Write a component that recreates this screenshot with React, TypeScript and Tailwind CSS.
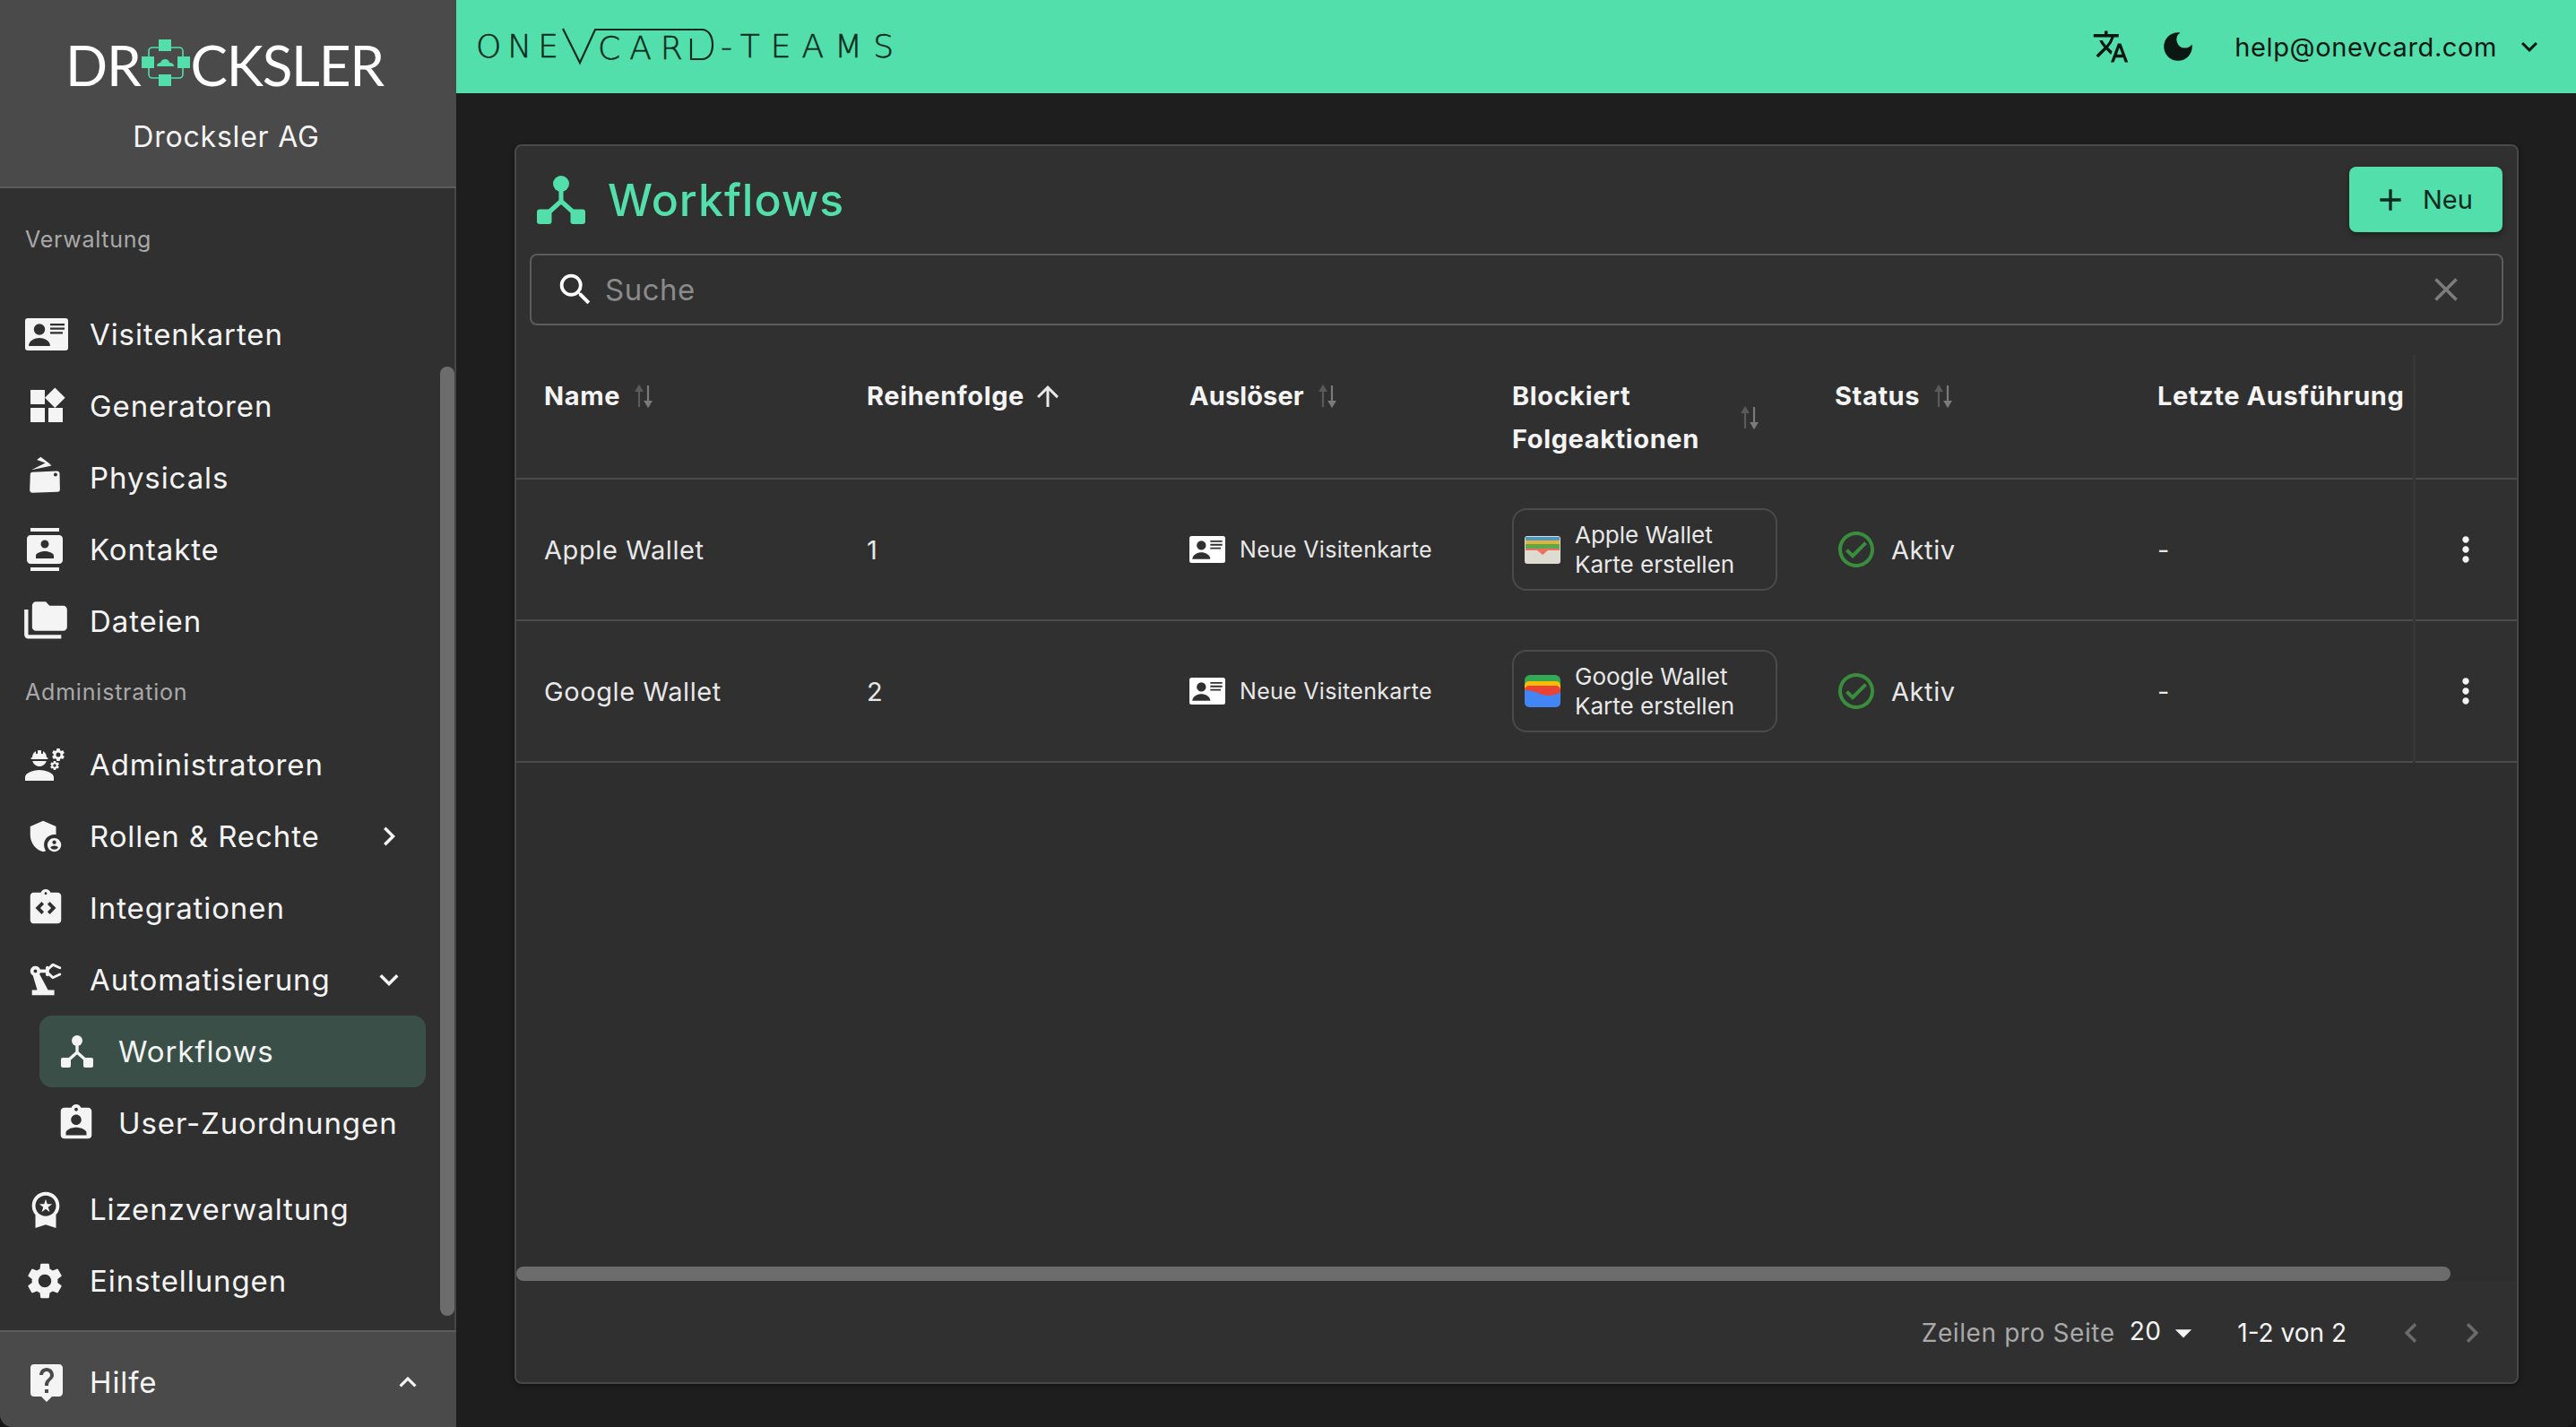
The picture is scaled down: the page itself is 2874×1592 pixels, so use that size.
import React from "react";
import {
  MdWidgets, MdContacts, MdFolderCopy, MdEngineering, MdAdminPanelSettings, MdIntegrationInstructions,
  MdPrecisionManufacturing, MdAssignmentInd, MdWorkspacePremium, MdSettings, MdLiveHelp, MdChevronRight,
  MdExpandMore, MdExpandLess, MdTranslate, MdDarkMode, MdAdd, MdSearch, MdClose, MdArrowUpward, MdMoreVert,
  MdOutlineCheckCircle, MdArrowDropDown, MdChevronLeft,
} from "react-icons/md";

const FONT = "font-['Inter','Liberation_Sans',sans-serif]";

function CardIcon({ className }: { className?: string }) {
  return (
    <svg viewBox="0 0 48 36" className={className}>
      <path fill="currentColor" d="M3 0h42a3 3 0 0 1 3 3v30a3 3 0 0 1-3 3H3a3 3 0 0 1-3-3V3a3 3 0 0 1 3-3z" />
      <circle cx="16" cy="12.5" r="6.2" fill="#303030" />
      <path d="M4 31c0-6 7-9 12-9s12 3 12 9z" fill="#303030" />
      <path d="M28 6h16v2.2H28zM28 10.6h16v2.2H28zM28 15.2h14v2.2H28z" fill="#303030" />
    </svg>
  );
}

function FlowIcon({ className }: { className?: string }) {
  return (
    <svg viewBox="0 0 36 36" className={className}>
      <circle cx="18" cy="6" r="6" fill="currentColor" />
      <path d="M18 8v11M18 19 8 28M18 19l10 9" stroke="currentColor" strokeWidth="3.4" fill="none" />
      <rect x="0" y="25" width="11" height="11" rx="2" fill="currentColor" />
      <rect x="25" y="25" width="11" height="11" rx="2" fill="currentColor" />
    </svg>
  );
}

function PhysicalIcon({ className }: { className?: string }) {
  return (
    <svg viewBox="0 0 120 130" className={className}>
      <path d="M8 60Q8 55 14 54L98 50Q106 50 107 58L108 112Q108 120 100 120L14 123Q7 123 6 115Z" fill="currentColor" />
      <circle cx="93" cy="62" r="6" fill="#303030" />
      <path d="M12 46 60 22 80 32ZM30 12 43 2 80 30Z" fill="currentColor" />
    </svg>
  );
}

function SortIcon() {
  return (
    <svg viewBox="0 0 24 28" className="w-[24px] h-[28px]">
      <path d="M7 6v20M4 8l3-5 3 5z" stroke="#5a5a5a" strokeWidth="2.2" fill="#5a5a5a" />
      <path d="M17 2v20M14 20l3 5 3-5z" stroke="#7a7a7a" strokeWidth="2.2" fill="#7a7a7a" />
    </svg>
  );
}

function Logo() {
  return (
    <div className="flex items-center justify-center h-[78px] text-white -translate-x-[4px]">
      <span className="font-['Lato',sans-serif] text-[62px] leading-none font-normal tracking-[-1.2px]">DR</span>
      <svg viewBox="0 0 54 52" className="w-[54px] h-[52px] mx-[1px] -translate-y-[2px]">
        <path d="M8 13a4 4 0 0 1 4-4h30a4 4 0 0 1 4 4v26a4 4 0 0 1-4 4H12a4 4 0 0 1-4-4z" fill="none" stroke="#52dfab" strokeWidth="1.6" />
        <rect x="19" y="0" width="14" height="13" fill="#52dfab" />
        <rect x="19" y="39" width="14" height="13" fill="#52dfab" />
        <rect x="0" y="19" width="14" height="13" fill="#52dfab" />
        <rect x="40" y="19" width="14" height="13" fill="#52dfab" />
        <path d="M17 30c0-3 2-4 4-4 1-3 3-4 5-4 3 0 5 2 5 4 3 0 5 1 5 4z" fill="#52dfab" />
      </svg>
      <span className="font-['Lato',sans-serif] text-[62px] leading-none font-normal tracking-[-1.2px]">CKSLER</span>
    </div>
  );
}

function NavRow({ icon, label, trail, active, sub }: { icon: React.ReactNode; label: string; trail?: React.ReactNode; active?: boolean; sub?: boolean }) {
  return (
    <div
      className={
        (active ? "bg-[#3a4f47] rounded-[14px] " : "") +
        (sub ? "ml-[44px] w-[431px] pl-[22px] " : "w-[480px] pl-[28px] ") +
        "h-[80px] flex items-center text-[#f4f4f4]"
      }
    >
      <span className={(sub ? "w-[66px] " : "w-[72px] ") + "shrink-0 flex items-center justify-start"}>{icon}</span>
      <span className="text-[33px] tracking-[0.9px] leading-none whitespace-nowrap">{label}</span>
      {trail ? <span className="absolute left-[413px] flex items-center">{trail}</span> : null}
    </div>
  );
}

function Sidebar() {
  return (
    <aside className="w-[509px] shrink-0 h-full flex flex-col bg-[#303030] relative">
      <div className="h-[210px] shrink-0 bg-[#4a4a4a] border-b-2 border-[#5c5c5c] flex flex-col items-center pt-[33px]">
        <Logo />
        <div className="mt-[21px] text-[32px] leading-[42px] tracking-[0.8px] text-[#f4f4f4] -translate-x-[2px]">Drocksler AG</div>
      </div>
      <div className="flex-1 relative border-r-2 border-[#454545] overflow-hidden">
        <div className="pt-[37px] relative">
          <div className="pl-[28px] text-[25px] leading-[40px] tracking-[0.7px] text-[#a9a9a9]">Verwaltung</div>
          <div className="mt-[46px]" />
          <NavRow label="Visitenkarten" icon={<CardIcon className="w-[48px] h-[36px]" />} />
          <NavRow label="Generatoren" icon={<MdWidgets size={48} />} />
          <NavRow label="Physicals" icon={<PhysicalIcon className="w-[40px] h-[43px] ml-[3px] -translate-y-[3px]" />} />
          <NavRow label="Kontakte" icon={<MdContacts size={48} className="-ml-[2px]" />} />
          <NavRow label="Dateien" icon={<MdFolderCopy size={52} className="-ml-[3px]" />} />
          <div className="pl-[28px] h-[80px] flex items-center text-[25px] tracking-[0.8px] text-[#a9a9a9]">Administration</div>
          <NavRow label="Administratoren" icon={<MdEngineering size={48} className="-ml-[2px]" />} />
          <NavRow label="Rollen & Rechte" icon={<MdAdminPanelSettings size={46} />} trail={<MdChevronRight size={42} />} />
          <NavRow label="Integrationen" icon={<MdIntegrationInstructions size={46} />} />
          <NavRow label="Automatisierung" icon={<MdPrecisionManufacturing size={46} />} trail={<MdExpandMore size={42} />} />
          <NavRow sub active label="Workflows" icon={<FlowIcon className="w-[36px] h-[36px] ml-[2px]" />} />
          <NavRow sub label="User-Zuordnungen" icon={<MdAssignmentInd size={46} className="-ml-[4px]" />} />
          <div className="h-[16px]" />
          <NavRow label="Lizenzverwaltung" icon={<MdWorkspacePremium size={46} />} />
          <NavRow label="Einstellungen" icon={<MdSettings size={48} className="-ml-[2px]" />} />
        </div>
        <div className="absolute right-0 top-[199px] w-[16px] h-[1059px] bg-[#6c6c6c] rounded-[8px]" />
      </div>
      <div className="h-[108px] shrink-0 bg-[#4a4a4a] border-t-2 border-[#5c5c5c] flex items-center pl-[28px] pt-[6px] relative text-[#f4f4f4]">
        <span className="w-[72px] flex"><MdLiveHelp size={48} /></span>
        <span className="text-[33px] tracking-[0.9px] leading-none">Hilfe</span>
        <MdExpandLess size={38} className="absolute left-[436px]" />
      </div>
    </aside>
  );
}

function TopLogo() {
  return (
    <div className="flex items-center text-[#0c2a20] font-['DejaVu_Sans',sans-serif] text-[36px] font-extralight leading-none ml-[22px] [-webkit-text-stroke:0.5px_#0c2a20]">
      <span className="tracking-[7px]">ONE</span>
      <svg viewBox="0 0 175 42" className="w-[175px] h-[42px] -ml-[3px] shrink-0" fill="none" stroke="#0c2a20" strokeWidth="2.2">
        <path d="M1 1 20 39 37 2H156C164 2 168 10 168 19S164 35 156 35H144V12" />
        <text x="40" y="35" fontSize="36" fontWeight="200" fill="#0c2a20" stroke="#0c2a20" strokeWidth="0.5" letterSpacing="10">CAR</text>
      </svg>
      <span className="tracking-[12px] ml-[2px]">-TEAMS</span>
    </div>
  );
}

function TopBar() {
  return (
    <header className="h-[104px] shrink-0 bg-[#52dfab] flex items-center justify-between pr-[34px]">
      <TopLogo />
      <div className="flex items-center text-[#0a1713]">
        <MdTranslate size={42} className="mr-[33px]" />
        <MdDarkMode size={42} className="mr-[42px]" />
        <span className="text-[29px] leading-none tracking-[0.6px] mr-[18px]">help@onevcard.com</span>
        <MdExpandMore size={36} />
      </div>
    </header>
  );
}

const GRID = "grid grid-cols-[360px_360px_360px_360px_360px_330px] pl-[31px]";

function Wallet({ kind }: { kind: "apple" | "google" }) {
  if (kind === "apple") {
    return (
      <svg viewBox="0 0 40 31" className="w-[40px] h-[31px] shrink-0">
        <rect width="40" height="31" rx="3" fill="#dedcd0" />
        <rect x="1" y="1" width="38" height="5" fill="#4a9ac8" />
        <rect x="1" y="5" width="38" height="5" fill="#e3b33a" />
        <rect x="1" y="9" width="38" height="6" fill="#5da84a" />
        <path d="M1 14h38v2H26l-6 5-6-5H1z" fill="#ee7060" />
      </svg>
    );
  }
  return (
    <svg viewBox="0 0 40 36" className="w-[40px] h-[36px] shrink-0">
      <path d="M0 6a6 6 0 0 1 6-6h28a6 6 0 0 1 6 6v12H0z" fill="#34a853" />
      <path d="M0 12a5 5 0 0 1 5-5h30a5 5 0 0 1 5 5v10H0z" fill="#fbbc04" />
      <path d="M0 17a5 5 0 0 1 5-5h30a5 5 0 0 1 5 5v8H0z" fill="#ea4335" />
      <path d="M0 17c8 0 14 3 20 5 7 2 14 1 20-3v12a5 5 0 0 1-5 5H5a5 5 0 0 1-5-5z" fill="#4285f4" />
    </svg>
  );
}

function Th({ children, sort }: { children: React.ReactNode; sort?: React.ReactNode }) {
  return (
    <div className="flex items-start gap-[14px] text-[29px] tracking-[0.6px] font-bold leading-[48px] text-[#f4f4f4] whitespace-nowrap">
      <span>{children}</span>
      {sort ? <span className="h-[48px] flex items-center">{sort}</span> : null}
    </div>
  );
}

function Row({ name, order, kind, wallet }: { name: string; order: string; kind: "apple" | "google"; wallet: string }) {
  return (
    <div className={GRID + " h-[158px] items-center border-b-2 border-[#4a4a4a] text-[29px] tracking-[0.6px] text-[#e8e8e8] leading-none"}>
      <div>{name}</div>
      <div>{order}</div>
      <div className="flex items-center gap-[16px]">
        <CardIcon className="w-[40px] h-[30px] text-white" />
        <span className="text-[25px] tracking-[0.3px]">Neue Visitenkarte</span>
      </div>
      <div>
        <div className="w-[296px] h-[92px] border-2 border-[#4a4a4a] rounded-[16px] flex items-center pl-[12px] gap-[16px]">
          <Wallet kind={kind} />
          <div className="text-[26px] tracking-[0px] leading-[33px]">
            <div>{wallet}</div>
            <div>Karte erstellen</div>
          </div>
        </div>
      </div>
      <div className="flex items-center gap-[15px]">
        <MdOutlineCheckCircle size={48} className="text-[#388e3c]" />
        <span>Aktiv</span>
      </div>
      <div>-</div>
    </div>
  );
}

function Card() {
  return (
    <section className="h-[1383px] w-[2236px] ml-[65px] mt-[57px] rounded-[8px] border-2 border-[#484848] bg-[#303030] flex flex-col overflow-hidden shadow-[0_2px_6px_rgba(0,0,0,0.4)]">
      <div className="flex items-start justify-between pl-[23px] pr-[16px] pt-[23px] h-[120px] shrink-0">
        <div className="flex items-center gap-[25px] h-[74px]">
          <FlowIcon className="w-[54px] h-[54px] text-[#52dfab]" />
          <h1 className="text-[50px] tracking-[1px] font-medium leading-none text-[#52dfab]">Workflows</h1>
        </div>
        <button className="w-[171px] h-[73px] bg-[#52dfab] rounded-[8px] flex items-center pl-[26px] text-[#0c2a20] shadow-[0_3px_6px_rgba(0,0,0,0.35)]">
          <MdAdd size={40} />
          <span className="ml-[16px] text-[29px] leading-none">Neu</span>
        </button>
      </div>
      <div className="mx-[15px] h-[80px] shrink-0 border-2 border-[#5c5c5c] rounded-[8px] flex items-center pl-[26px] pr-[40px]">
        <MdSearch size={46} className="text-white" />
        <span className="ml-[10px] flex-1 text-[33px] tracking-[0.5px] text-[#8a8a8a] leading-none">Suche</span>
        <MdClose size={44} className="text-[#7c7c7c]" />
      </div>
      <div className="flex-1 relative overflow-hidden bg-[#2e2e2e]">
        <div className="bg-[#303030]">
          <div className={GRID + " h-[172px] pt-[55px] border-b-2 border-[#4a4a4a]"}>
            <Th sort={<SortIcon />}>Name</Th>
            <Th sort={<MdArrowUpward size={36} className="text-[#e8e8e8] -ml-[6px]" />}>Reihenfolge</Th>
            <Th sort={<SortIcon />}><span className="tracking-[0.1px]">Auslöser</span></Th>
            <div className="flex items-center text-[29px] tracking-[0.6px] font-bold leading-[48px] text-[#f4f4f4] h-[96px] w-[277px] justify-between">
              <span>Blockiert<br />Folgeaktionen</span>
              <SortIcon />
            </div>
            <Th sort={<SortIcon />}>Status</Th>
            <Th>Letzte Ausführung</Th>
          </div>
          <Row name="Apple Wallet" order="1" kind="apple" wallet="Apple Wallet" />
          <Row name="Google Wallet" order="2" kind="google" wallet="Google Wallet" />
        </div>
        <div className="absolute right-0 top-[33px] w-[116px] h-[455px] flex flex-col text-[#f4f4f4] border-l-[3px] border-[#373737]">
          <div className="h-[139px] border-b-2 border-[#4a4a4a] bg-[#303030]" />
          <div className="h-[158px] border-b-2 border-[#4a4a4a] bg-[#303030] flex items-center justify-center pr-[2px]"><MdMoreVert size={44} /></div>
          <div className="h-[158px] border-b-2 border-[#4a4a4a] bg-[#303030] flex items-center justify-center pr-[2px]"><MdMoreVert size={44} /></div>
        </div>
        <div className="absolute left-0 bottom-0 w-[2158px] h-[16px] bg-[#6c6c6c] rounded-[8px]" />
      </div>
      <div className="h-[113px] shrink-0 flex items-center justify-end pr-[28px] pt-[3px] text-[#f4f4f4]">
        <span className="text-[28px] tracking-[0.6px] text-[#a9a9a9] leading-none">Zeilen pro Seite</span>
        <span className="ml-[16px] text-[28px] tracking-[0.4px] leading-none -translate-y-[2px]">20</span>
        <MdArrowDropDown size={44} className="ml-[3px]" />
        <span className="ml-[38px] text-[28px] leading-none">1-2 von 2</span>
        <MdChevronLeft size={44} className="ml-[50px] text-[#6a6a6a]" />
        <MdChevronRight size={44} className="ml-[24px] text-[#6a6a6a]" />
      </div>
    </section>
  );
}

export default function App() {
  return (
    <div className="w-[2874px] h-[1592px] bg-[#161616]">
      <div className={FONT + " w-full h-full bg-[#1e1e1e] flex overflow-hidden rounded-b-[14px]"}>
        <Sidebar />
        <main className="flex-1 flex flex-col min-w-0">
          <TopBar />
          <Card />
        </main>
      </div>
    </div>
  );
}
